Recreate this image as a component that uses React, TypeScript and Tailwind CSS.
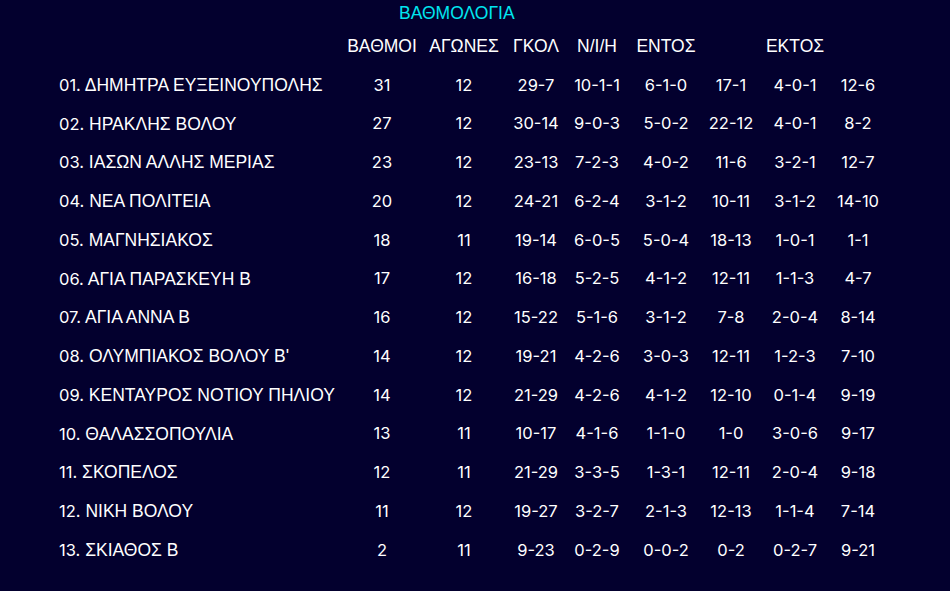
const rows = [
  ["01.", "ΔΗΜΗΤΡΑ ΕΥΞΕΙΝΟΥΠΟΛΗΣ", "31", "12", "29-7", "10-1-1", "6-1-0", "17-1", "4-0-1", "12-6"],
  ["02.", "ΗΡΑΚΛΗΣ ΒΟΛΟΥ", "27", "12", "30-14", "9-0-3", "5-0-2", "22-12", "4-0-1", "8-2"],
  ["03.", "ΙΑΣΩΝ ΑΛΛΗΣ ΜΕΡΙΑΣ", "23", "12", "23-13", "7-2-3", "4-0-2", "11-6", "3-2-1", "12-7"],
  ["04.", "ΝΕΑ ΠΟΛΙΤΕΙΑ", "20", "12", "24-21", "6-2-4", "3-1-2", "10-11", "3-1-2", "14-10"],
  ["05.", "ΜΑΓΝΗΣΙΑΚΟΣ", "18", "11", "19-14", "6-0-5", "5-0-4", "18-13", "1-0-1", "1-1"],
  ["06.", "ΑΓΙΑ ΠΑΡΑΣΚΕΥΗ Β", "17", "12", "16-18", "5-2-5", "4-1-2", "12-11", "1-1-3", "4-7"],
  ["07.", "ΑΓΙΑ ΑΝΝΑ Β", "16", "12", "15-22", "5-1-6", "3-1-2", "7-8", "2-0-4", "8-14"],
  ["08.", "ΟΛΥΜΠΙΑΚΟΣ ΒΟΛΟΥ Β'", "14", "12", "19-21", "4-2-6", "3-0-3", "12-11", "1-2-3", "7-10"],
  ["09.", "ΚΕΝΤΑΥΡΟΣ ΝΟΤΙΟΥ ΠΗΛΙΟΥ", "14", "12", "21-29", "4-2-6", "4-1-2", "12-10", "0-1-4", "9-19"],
  ["10.", "ΘΑΛΑΣΣΟΠΟΥΛΙΑ", "13", "11", "10-17", "4-1-6", "1-1-0", "1-0", "3-0-6", "9-17"],
  ["11.", "ΣΚΟΠΕΛΟΣ", "12", "11", "21-29", "3-3-5", "1-3-1", "12-11", "2-0-4", "9-18"],
  ["12.", "ΝΙΚΗ ΒΟΛΟΥ", "11", "12", "19-27", "3-2-7", "2-1-3", "12-13", "1-1-4", "7-14"],
  ["13.", "ΣΚΙΑΘΟΣ Β", "2", "11", "9-23", "0-2-9", "0-0-2", "0-2", "0-2-7", "9-21"],
];

const widths = [
  "w-[86px]",
  "w-[78px]",
  "w-[66px]",
  "w-[56px]",
  "w-[82px]",
  "w-[48px]",
  "w-[80px]",
  "w-[46px]",
];

const headers = ["ΒΑΘΜΟΙ", "ΑΓΩΝΕΣ", "ΓΚΟΛ", "Ν/Ι/Η", "ΕΝΤΟΣ", "", "ΕΚΤΟΣ", ""];

const App = () => {
  return (
    <div className="min-h-[591px] w-full bg-[#03002e] pt-[3px] text-white font-['Liberation_Sans',sans-serif]">
      <h2 className="pl-[399px] text-[17.5px] leading-[20px] text-[#00e6f0]">
        ΒΑΘΜΟΛΟΓΙΑ
      </h2>
      <table className="ml-[59px] mt-[3.5px] table-fixed border-collapse text-[17.5px]">
        <thead>
          <tr className="h-[39px]">
            <th className="w-[280px]"></th>
            {headers.map((h, i) => (
              <th key={i} className={`${widths[i]} p-0 text-center font-normal`}>
                {h}
              </th>
            ))}
          </tr>
        </thead>
        <tbody>
          {rows.map((r, idx) => (
            <tr key={idx} className="h-[38.75px]">
              <td className="p-0 text-left whitespace-nowrap">
                <span className="font-['Inter',sans-serif] text-[16.5px]">{r[0]}</span>{" "}
                {r[1]}
              </td>
              {r.slice(2).map((v, i) => (
                <td
                  key={i}
                  className={`${widths[i]} p-0 text-center font-['Inter',sans-serif] text-[16.5px] whitespace-nowrap`}
                >
                  {v}
                </td>
              ))}
            </tr>
          ))}
        </tbody>
      </table>
    </div>
  );
};

export default App;
